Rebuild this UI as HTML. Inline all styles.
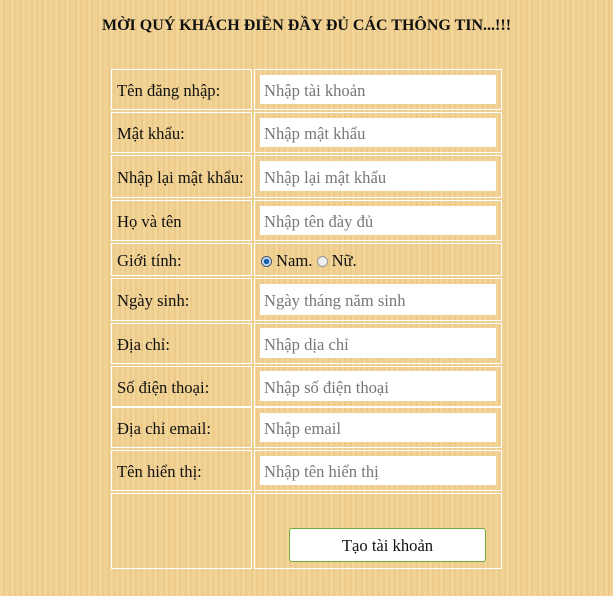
<!DOCTYPE html>
<html><head><meta charset="utf-8"><style>
body{margin:0;width:613px;height:596px;overflow:hidden;position:relative;font-family:"Liberation Serif",serif;
background:#efcf8f;
background-image:repeating-linear-gradient(90deg,rgba(255,240,200,.18) 0 3px,rgba(210,160,80,.08) 3px 5px,rgba(255,235,180,.12) 5px 9px,rgba(200,150,70,.07) 9px 11px);}
h1{position:absolute;left:0;width:613px;top:17px;margin:0;text-align:center;font-size:16px;font-weight:bold;color:#111}
.c{position:absolute;border:1px solid #fff;box-sizing:border-box}
.l{left:111px;width:141px;font-size:16.6px;color:#111;padding-left:5px;padding-top:3px;display:flex;align-items:center}
.r{left:254px;width:248px}
.i{position:absolute;left:5px;right:5px;background:#fff;font-size:16.6px;color:#777;padding-left:4px;padding-top:3px;box-sizing:border-box;display:flex;align-items:center}
.btn{position:absolute;left:289px;top:528px;width:197px;height:34px;box-sizing:border-box;border:1px solid #6aad3a;border-radius:3px;background:#fff;font-size:16.6px;color:#111;display:flex;align-items:center;justify-content:center;padding-top:2px}
.rad{display:inline-block;width:11px;height:11px;border-radius:50%;border:1px solid #999;background:#eee;box-sizing:border-box;margin-right:4px;vertical-align:-1px}
</style></head><body>
<h1>MỜI QUÝ KHÁCH ĐIỀN ĐẦY ĐỦ CÁC THÔNG TIN...!!!</h1>

<div class="c l" style="top:69px;height:41px">Tên đăng nhập:</div>
<div class="c r" style="top:69px;height:41px"><div class="i" style="top:5px;height:29px">Nhập tài khoản</div></div>

<div class="c l" style="top:112px;height:41px">Mật khẩu:</div>
<div class="c r" style="top:112px;height:41px"><div class="i" style="top:5px;height:29px">Nhập mật khẩu</div></div>

<div class="c l" style="top:155px;height:43px">Nhập lại mật khẩu:</div>
<div class="c r" style="top:155px;height:43px"><div class="i" style="top:5px;height:30px">Nhập lại mật khẩu</div></div>

<div class="c l" style="top:200px;height:41px">Họ và tên</div>
<div class="c r" style="top:200px;height:41px"><div class="i" style="top:5px;height:29px">Nhập tên đày đủ</div></div>

<div class="c l" style="top:243px;height:33px">Giới tính:</div>
<div class="c r" style="top:243px;height:33px;font-size:16.6px;color:#111;display:flex;align-items:center;padding-left:6px;padding-top:3px"><span class="rad" style="background:radial-gradient(circle,#1a5fa8 0 2.5px,#cfe3f5 3px);border-color:#456"></span>Nam.&nbsp;<span class="rad"></span>Nữ.</div>

<div class="c l" style="top:278px;height:43px">Ngày sinh:</div>
<div class="c r" style="top:278px;height:43px"><div class="i" style="top:5px;height:31px">Ngày tháng năm sinh</div></div>

<div class="c l" style="top:323px;height:41px">Địa chỉ:</div>
<div class="c r" style="top:323px;height:41px"><div class="i" style="top:4px;height:30px">Nhập dịa chỉ</div></div>

<div class="c l" style="top:366px;height:41px">Số điện thoại:</div>
<div class="c r" style="top:366px;height:41px"><div class="i" style="top:4px;height:30px">Nhập số điện thoại</div></div>

<div class="c l" style="top:407px;height:41px">Địa chỉ email:</div>
<div class="c r" style="top:407px;height:41px"><div class="i" style="top:5px;height:29px">Nhập email</div></div>

<div class="c l" style="top:450px;height:41px">Tên hiển thị:</div>
<div class="c r" style="top:450px;height:41px"><div class="i" style="top:5px;height:29px">Nhập tên hiển thị</div></div>

<div class="c l" style="top:493px;height:76px"></div>
<div class="c r" style="top:493px;height:76px"></div>
<div class="btn">Tạo tài khoản</div>
</body></html>
